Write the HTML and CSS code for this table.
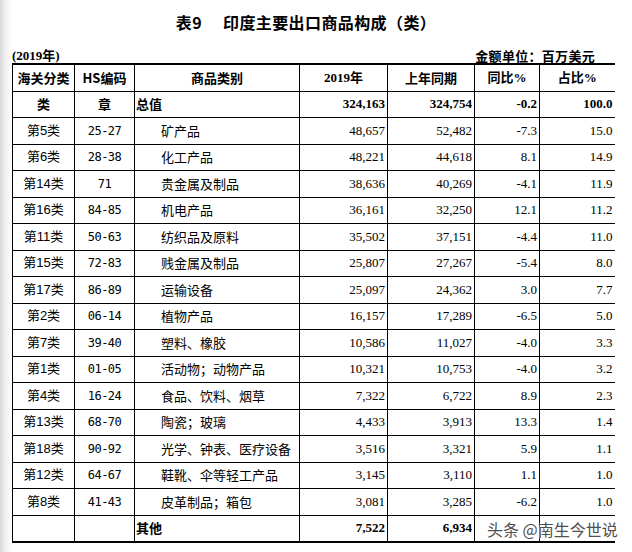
FILE: index.html
```html
<!DOCTYPE html>
<html lang="zh-CN">
<head>
<meta charset="utf-8">
<title>表9 印度主要出口商品构成（类）</title>
<link rel="stylesheet" href="styles.css">
</head>
<body>
<div class="page">
  <h1 class="title">表9<span class="gap"></span>印度主要出口商品构成（类）</h1>
  <div class="meta">
    <span class="year">(2019年)</span>
    <span class="unit">金额单位：百万美元</span>
  </div>
  <table class="grid">
    <colgroup>
      <col class="c1"><col class="c2"><col class="c3"><col class="c4"><col class="c5"><col class="c6"><col class="c7">
    </colgroup>
    <thead>
      <tr class="head">
        <th>海关分类</th><th>HS编码</th><th>商品类别</th><th><span class="tn">2019</span>年</th><th>上年同期</th><th>同比<span class="tn">%</span></th><th>占比<span class="tn">%</span></th>
      </tr>
    </thead>
    <tbody>
      <tr class="total">
        <td class="cls">类</td><td class="code">章</td><td class="name">总值</td><td class="num">324,163</td><td class="num">324,754</td><td class="num">-0.2</td><td class="num">100.0</td>
      </tr>
      <tr><td class="cls">第5类</td><td class="code">25-27</td><td class="name">矿产品</td><td class="num">48,657</td><td class="num">52,482</td><td class="num">-7.3</td><td class="num">15.0</td></tr>
      <tr><td class="cls">第6类</td><td class="code">28-38</td><td class="name">化工产品</td><td class="num">48,221</td><td class="num">44,618</td><td class="num">8.1</td><td class="num">14.9</td></tr>
      <tr><td class="cls">第14类</td><td class="code">71</td><td class="name">贵金属及制品</td><td class="num">38,636</td><td class="num">40,269</td><td class="num">-4.1</td><td class="num">11.9</td></tr>
      <tr><td class="cls">第16类</td><td class="code">84-85</td><td class="name">机电产品</td><td class="num">36,161</td><td class="num">32,250</td><td class="num">12.1</td><td class="num">11.2</td></tr>
      <tr><td class="cls">第11类</td><td class="code">50-63</td><td class="name">纺织品及原料</td><td class="num">35,502</td><td class="num">37,151</td><td class="num">-4.4</td><td class="num">11.0</td></tr>
      <tr><td class="cls">第15类</td><td class="code">72-83</td><td class="name">贱金属及制品</td><td class="num">25,807</td><td class="num">27,267</td><td class="num">-5.4</td><td class="num">8.0</td></tr>
      <tr><td class="cls">第17类</td><td class="code">86-89</td><td class="name">运输设备</td><td class="num">25,097</td><td class="num">24,362</td><td class="num">3.0</td><td class="num">7.7</td></tr>
      <tr><td class="cls">第2类</td><td class="code">06-14</td><td class="name">植物产品</td><td class="num">16,157</td><td class="num">17,289</td><td class="num">-6.5</td><td class="num">5.0</td></tr>
      <tr><td class="cls">第7类</td><td class="code">39-40</td><td class="name">塑料、橡胶</td><td class="num">10,586</td><td class="num">11,027</td><td class="num">-4.0</td><td class="num">3.3</td></tr>
      <tr><td class="cls">第1类</td><td class="code">01-05</td><td class="name">活动物；动物产品</td><td class="num">10,321</td><td class="num">10,753</td><td class="num">-4.0</td><td class="num">3.2</td></tr>
      <tr><td class="cls">第4类</td><td class="code">16-24</td><td class="name">食品、饮料、烟草</td><td class="num">7,322</td><td class="num">6,722</td><td class="num">8.9</td><td class="num">2.3</td></tr>
      <tr><td class="cls">第13类</td><td class="code">68-70</td><td class="name">陶瓷；玻璃</td><td class="num">4,433</td><td class="num">3,913</td><td class="num">13.3</td><td class="num">1.4</td></tr>
      <tr><td class="cls">第18类</td><td class="code">90-92</td><td class="name">光学、钟表、医疗设备</td><td class="num">3,516</td><td class="num">3,321</td><td class="num">5.9</td><td class="num">1.1</td></tr>
      <tr><td class="cls">第12类</td><td class="code">64-67</td><td class="name">鞋靴、伞等轻工产品</td><td class="num">3,145</td><td class="num">3,110</td><td class="num">1.1</td><td class="num">1.0</td></tr>
      <tr><td class="cls">第8类</td><td class="code">41-43</td><td class="name">皮革制品；箱包</td><td class="num">3,081</td><td class="num">3,285</td><td class="num">-6.2</td><td class="num">1.0</td></tr>
      <tr class="total"><td class="cls"></td><td class="code"></td><td class="name">其他</td><td class="num">7,522</td><td class="num">6,934</td><td class="num"></td><td class="num"></td></tr>
    </tbody>
  </table>
  <div class="watermark">头条 @南生今世说</div>
</div>
</body>
</html>
```

FILE: styles.css
```css
html, body {
  margin: 0;
  padding: 0;
}
body {
  width: 632px;
  height: 552px;
  background: linear-gradient(to right, #d9d9d9 0px, #efefef 5px, #ffffff 12px);
  font-family: "Noto Sans CJK SC", sans-serif;
  color: #000;
  overflow: hidden;
}
.page {
  position: relative;
  padding: 12px 18px 0 12px;
  width: 602px;
}
.title {
  margin: 0;
  padding-right: 14px;
  text-align: center;
  font-size: 16px;
  line-height: 20px;
  font-weight: 700;
  letter-spacing: 0.4px;
}
.gap {
  display: inline-block;
  width: 21px;
}
.meta {
  display: flex;
  justify-content: space-between;
  align-items: center;
  margin-top: 16px;
  height: 15px;
  padding-right: 19px;
  font-size: 13px;
  font-weight: 700;
  line-height: 15px;
}
.year {
  font-family: "Liberation Serif", "Noto Sans CJK SC", serif;
}
.unit {
  letter-spacing: 0.3px;
}
.grid {
  width: 602px;
  table-layout: fixed;
  border-collapse: collapse;
  font-size: 13px;
}
.c1 { width: 62px; }
.c2 { width: 60px; }
.c3 { width: 165px; }
.c4 { width: 88px; }
.c5 { width: 87px; }
.c6 { width: 65px; }
.c7 { width: 75px; }
.grid th,
.grid td {
  height: 25.5px;
  padding: 0 2px;
  border: 1px solid #000;
  line-height: 16px;
  white-space: nowrap;
  overflow: hidden;
}
.grid th:last-child,
.grid td:last-child {
  border-right: none;
}
.grid thead tr {
  border-top: 2px solid #000;
}
.grid tbody tr:last-child {
  border-bottom: 2px solid #000;
}
.head th {
  font-weight: 700;
  text-align: center;
  font-size: 13px;
}
.tn {
  font-family: "Liberation Serif", serif;
  font-weight: 700;
}
.cls {
  text-align: center;
  font-family: "Liberation Sans", "Noto Sans CJK SC", sans-serif;
}
.code {
  text-align: center;
  font-family: "DejaVu Sans Mono", monospace;
  font-size: 12px;
  letter-spacing: -0.5px;
}
.name {
  text-align: left;
  padding-left: 26px !important;
}
.num {
  text-align: right;
  font-family: "Liberation Serif", serif;
}
.total td {
  font-weight: 700;
}
.total .cls,
.total .code {
  font-family: "Noto Sans CJK SC", sans-serif;
  font-size: 13px;
  letter-spacing: 0;
}
.total .name {
  padding-left: 1px !important;
}
.watermark {
  position: absolute;
  left: 487px;
  top: 518px;
  font-size: 16px;
  line-height: 22px;
  color: #505050;
  text-shadow: 0 0 2px #fff, 0 0 2px #fff;
  white-space: nowrap;
}
```
